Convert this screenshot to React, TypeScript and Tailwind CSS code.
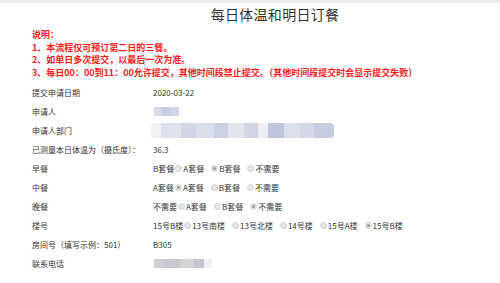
import React from "react";

const F = { fontFamily: '"Noto Sans CJK SC", "Noto Sans", sans-serif' };

function Radio({ checked }: { checked?: boolean }) {
  return (
    <span className="inline-flex items-center justify-center w-[7px] h-[7px] rounded-full bg-[#e6e6e6] border border-[#d4d4d4] shrink-0">
      {checked && <span className="w-[3px] h-[3px] rounded-full bg-[#9a9a9a]" />}
    </span>
  );
}

function Options({ prefix, items, checked }: { prefix: string; items: string[]; checked: number }) {
  return (
    <div className="flex items-center">
      <span>{prefix}</span>
      {items.map((t, i) => (
        <span key={i} className={"flex items-center " + (i > 0 ? "ml-[7px]" : "ml-[1px]")}>
          <Radio checked={i === checked} />
          <span className="ml-[1px]">{t}</span>
        </span>
      ))}
    </div>
  );
}

function Row({ label, children }: { label: string; children?: React.ReactNode }) {
  return (
    <div className="flex items-center h-[19px]">
      <div className="w-[121px] shrink-0">{label}</div>
      <div className="flex-1">{children}</div>
    </div>
  );
}

export default function App() {
  return (
    <div className="w-[500px] h-[283px] bg-white overflow-hidden text-[#333]" style={F}>
      <div className="h-[3px] bg-[#eeeeee]" />
      <div className="flex justify-center pl-[50px] pt-[2px]">
        <div className="text-[14px] leading-[18px] tracking-[0.3px] text-[#333]">每日体温和明日订餐</div>
      </div>
      <div className="pl-[32px] pt-[6px] text-[#ff1a1a] font-bold text-[9px] leading-[12.5px]">
        <div>说明：</div>
        <div>1、本流程仅可预订第二日的三餐。</div>
        <div>2、如单日多次提交，以最后一次为准。</div>
        <div>3、每日00：00到11：00允许提交，其他时间段禁止提交。（其他时间段提交时会显示提交失败）</div>
      </div>
      <div className="pl-[32px] pt-[4px] text-[8px] leading-[10px]">
        <Row label="提交申请日期">2020-03-22</Row>
        <Row label="申请人">
          <div className="flex h-[9px] w-[25px] ml-[1px] blur-[0.6px]">
            <div className="flex-1 bg-[#d6d9e6]" />
            <div className="flex-1 bg-[#c9cde0]" />
            <div className="flex-1 bg-[#d2d6e4]" />
          </div>
        </Row>
        <Row label="申请人部门">
          <div className="flex h-[15px] w-[183px] -ml-[2px] blur-[0.7px] rounded-[4px] overflow-hidden">
            <div className="w-[10px] bg-[#f0f1f5]" />
            <div className="w-[20px] bg-[#dfe2ec]" />
            <div className="w-[15px] bg-[#d2d6e4]" />
            <div className="w-[18px] bg-[#dadeea]" />
            <div className="w-[14px] bg-[#cdd2e2]" />
            <div className="w-[16px] bg-[#e2e5ee]" />
            <div className="w-[14px] bg-[#d0d4e3]" />
            <div className="w-[10px] bg-[#eceef3]" />
            <div className="w-[16px] bg-[#bfc6dc]" />
            <div className="w-[16px] bg-[#dbdfea]" />
            <div className="w-[14px] bg-[#d4d8e6]" />
            <div className="flex-1 bg-[#c6cce0]" />
          </div>
        </Row>
        <Row label="已测量本日体温为（摄氏度）：">36.3</Row>
        <Row label="早餐">
          <Options prefix="B套餐" items={["A套餐", "B套餐", "不需要"]} checked={1} />
        </Row>
        <Row label="中餐">
          <Options prefix="A套餐" items={["A套餐", "B套餐", "不需要"]} checked={0} />
        </Row>
        <Row label="晚餐">
          <Options prefix="不需要" items={["A套餐", "B套餐", "不需要"]} checked={2} />
        </Row>
        <Row label="楼号">
          <Options prefix="15号B楼" items={["13号南楼", "13号北楼", "14号楼", "15号A楼", "15号B楼"]} checked={4} />
        </Row>
        <Row label="房间号（填写示例：501）">B305</Row>
        <Row label="联系电话">
          <div className="flex h-[9px] w-[58px] ml-[1px] blur-[0.6px]">
            <div className="w-[12px] bg-[#cfcfd4]" />
            <div className="w-[14px] bg-[#c8c8ce]" />
            <div className="w-[14px] bg-[#d4d4d8]" />
            <div className="w-[10px] bg-[#c4c4ca]" />
            <div className="flex-1 bg-[#eef0f6]" />
          </div>
        </Row>
      </div>
    </div>
  );
}
